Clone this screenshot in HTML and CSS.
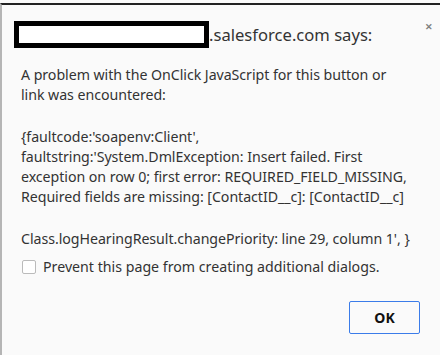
FILE: index.html
```html
<!DOCTYPE html>
<html lang="en">
<head>
  <meta charset="UTF-8">
  <title>salesforce.com says</title>
  <link rel="stylesheet" href="styles.css">
</head>
<body>
  <div class="dialog">
    <div class="dialog-head">
      <h1 class="title"><span class="redacted"></span>.salesforce.com says:</h1>
      <span class="close">&#x2715;</span>
    </div>
    <div class="message">
      <p>A problem with the OnClick JavaScript for this button or<br>link was encountered:</p>
      <p>{faultcode:'soapenv:Client',<br>faultstring:'System.DmlException: Insert failed. First<br>exception on row 0; first error: REQUIRED_FIELD_MISSING,<br>Required fields are missing: [ContactID__c]: [ContactID__c]</p>
      <p>Class.logHearingResult.changePriority: line 29, column 1', }</p>
    </div>
    <label class="suppress">
      <span class="check"></span>
      Prevent this page from creating additional dialogs.
    </label>
    <div class="actions">
      <button class="btn">OK</button>
    </div>
  </div>
</body>
</html>
```

FILE: styles.css
```css
html, body {
  margin: 0;
  padding: 0;
  background: #fafafa;
}
body {
  font-family: 'Noto Sans', sans-serif;
  color: #333;
  width: 440px;
  height: 355px;
  overflow: hidden;
}
.dialog {
  height: 352px;
  margin-top: 3px;
  border-top: 2px solid #222;
  border-left: 2px solid #b5b5b5;
  box-sizing: border-box;
}
.dialog-head {
  display: flex;
  justify-content: space-between;
  align-items: flex-start;
  padding: 16px 7px 0 12px;
}
.title {
  display: flex;
  align-items: center;
  margin: 0;
  font-size: 16.6px;
  font-weight: normal;
  color: #333;
}
.redacted {
  width: 185px;
  height: 17px;
  border: 5px solid #000;
  background: #fff;
}
.close {
  color: #808080;
  font-size: 9px;
  font-weight: bold;
  line-height: 10px;
  margin-top: 1px;
}
.message {
  padding: 17px 0 0 19px;
  font-size: 14.2px;
  line-height: 20px;
  letter-spacing: -0.05px;
}
.message p {
  margin: 0 0 22px;
}
.message p:last-child {
  margin-bottom: 8px;
}
.suppress {
  display: flex;
  align-items: center;
  gap: 7px;
  padding-left: 20px;
  font-size: 14.2px;
  line-height: 20px;
}
.check {
  width: 12px;
  height: 12px;
  border: 1px solid #bbb;
  border-radius: 2px;
  background: #fff;
}
.actions {
  display: flex;
  justify-content: flex-end;
  padding: 24px 20px 0 0;
}
.btn {
  width: 71px;
  height: 33px;
  background: #fafafa;
  border: 1px solid #3b7ce9;
  border-radius: 2px;
  outline: none;
  font-family: 'Noto Sans', sans-serif;
  font-weight: bold;
  font-size: 14px;
  color: #111;
}
```
